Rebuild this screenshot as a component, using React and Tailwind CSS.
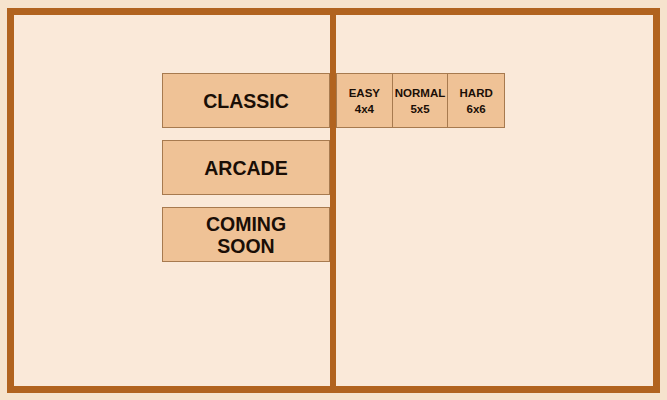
export default function App() {
  const modes = [["CLASSIC"], ["ARCADE"], ["COMING", "SOON"]];
  const sizes = [
    ["EASY", "4x4"],
    ["NORMAL", "5x5"],
    ["HARD", "6x6"],
  ];

  return (
    <div
      className="w-[667px] h-[400px] bg-[#f6e3cd] pt-[8px] pl-[7px] overflow-hidden"
      style={{ fontFamily: '"Liberation Sans", Arial, sans-serif' }}
    >
      <div className="w-[653px] h-[385px] border-[7px] border-[#b1631f] bg-[#fae9d9] flex">
        {/* game mode column */}
        <div className="w-[322px] h-full border-r-[6px] border-[#b1631f] flex flex-col items-end pt-[58px] gap-[12px]">
          {modes.map((lines) => (
            <button
              key={lines.join(" ")}
              className="w-[168px] h-[55px] bg-[#efc296] border border-[#a77a4f] flex flex-col items-center justify-center text-[19.5px] leading-[22px] font-bold text-[#1a0e06]"
            >
              {lines.map((l) => (
                <span key={l}>{l}</span>
              ))}
            </button>
          ))}
        </div>

        {/* difficulty column */}
        <div className="flex-1 h-full pt-[58px]">
          <div className="w-[169px] h-[55px] grid grid-cols-3 bg-[#efc296] border border-[#a77a4f] divide-x divide-[#a77a4f]">
            {sizes.map(([name, dim]) => (
              <button
                key={name}
                className="flex flex-col items-center justify-center text-[11.5px] leading-[16px] font-bold text-[#1a0e06]"
              >
                <span>{name}</span>
                <span>{dim}</span>
              </button>
            ))}
          </div>
        </div>
      </div>
    </div>
  );
}
